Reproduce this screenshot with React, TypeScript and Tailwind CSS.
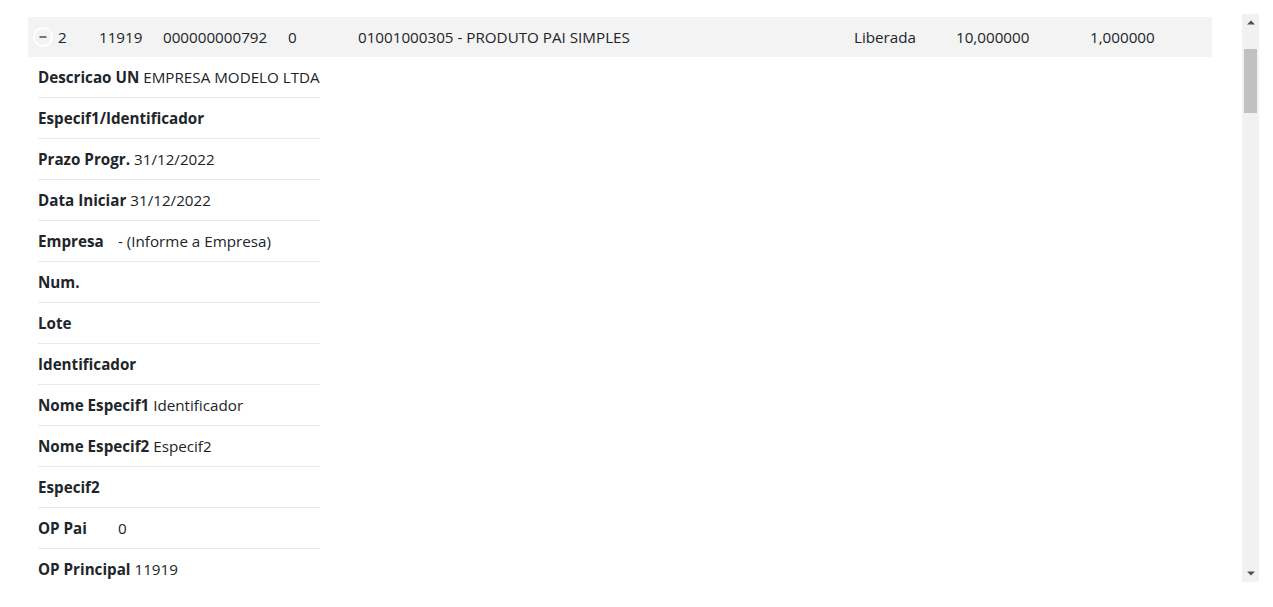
const detalhes: { label: string; value?: string; fixed?: boolean }[] = [
  { label: "Descricao UN", value: "EMPRESA MODELO LTDA" },
  { label: "Especif1/Identificador" },
  { label: "Prazo Progr.", value: "31/12/2022" },
  { label: "Data Iniciar", value: "31/12/2022" },
  { label: "Empresa", value: "- (Informe a Empresa)", fixed: true },
  { label: "Num." },
  { label: "Lote" },
  { label: "Identificador" },
  { label: "Nome Especif1", value: "Identificador" },
  { label: "Nome Especif2", value: "Especif2" },
  { label: "Especif2" },
  { label: "OP Pai", value: "0", fixed: true },
  { label: "OP Principal", value: "11919" },
];

function MinusIcon() {
  return (
    <span className="flex h-[20px] w-[20px] items-center justify-center rounded-full border-2 border-white bg-[#f3f3f3]">
      <svg width="10" height="10" viewBox="0 0 10 10">
        <path d="M1.5 5h7" stroke="#212529" strokeWidth="1.2" />
      </svg>
    </span>
  );
}

function Scrollbar() {
  return (
    <div className="flex h-full w-[17px] shrink-0 flex-col bg-[#f1f1f1]">
      <div className="flex h-[17px] items-center justify-center">
        <svg width="8" height="5" viewBox="0 0 8 5">
          <path d="M0 4.5 4 0.5 8 4.5z" fill="#505050" />
        </svg>
      </div>
      <div className="flex-1 px-[2px] pt-[18px]">
        <div className="h-[64px] bg-[#c1c1c1]" />
      </div>
      <div className="flex h-[17px] items-center justify-center">
        <svg width="8" height="5" viewBox="0 0 8 5">
          <path d="M0 0.5 4 4.5 8 0.5z" fill="#505050" />
        </svg>
      </div>
    </div>
  );
}

export default function App() {
  return (
    <div className="h-[607px] w-full bg-white pt-[14px] font-['Open_Sans',sans-serif] text-[15.2px] text-[#212529]">
      <div className="ml-[14px] flex h-[568px] w-[1245px]">
        <div className="min-w-0 flex-1 overflow-hidden pl-[14px] pr-[30px] pt-[3px]">
          <div className="flex h-[40px] items-center bg-[#f3f3f3] pl-[5px] whitespace-nowrap">
            <MinusIcon />
            <span className="ml-[5px] w-[41px]">2</span>
            <span className="w-[64px]">11919</span>
            <span className="w-[125px]">000000000792</span>
            <span className="w-[70px]">0</span>
            <span className="w-[496px]">01001000305 - PRODUTO PAI SIMPLES</span>
            <span className="w-[102px]">Liberada</span>
            <span className="w-[134px]">10,000000</span>
            <span>1,000000</span>
          </div>

          <ul className="ml-[10px] w-[282px]">
            {detalhes.map((d) => (
              <li
                key={d.label}
                className="flex h-[41px] items-center border-b border-[#e9e9e9] whitespace-nowrap"
              >
                <b className={d.fixed ? "inline-block w-[80px] font-bold" : "mr-[4px] font-bold"}>
                  {d.label}
                </b>
                {d.value && <span>{d.value}</span>}
              </li>
            ))}
          </ul>
        </div>

        <Scrollbar />
      </div>
    </div>
  );
}
